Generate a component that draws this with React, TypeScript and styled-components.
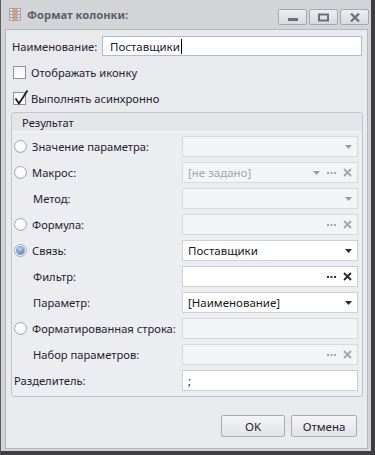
import React from "react";
import styled, { createGlobalStyle } from "styled-components";

const Global = createGlobalStyle`
  html, body { margin: 0; padding: 0; background: #d3d4d8; }
  body { font-family: "Noto Sans", "Open Sans", sans-serif; font-size: 11.2px; color: #1f2030; }
  * { box-sizing: border-box; }
`;

const Window = styled.div`
  width: 375px;
  height: 455px;
  display: flex;
  flex-direction: column;
  background: #d3d4d8;
  border-left: 1px solid #5c5c5e;
  border-right: 4px solid #3e3e40;
  border-bottom: 4px solid #3e3e40;
`;

const TitleBar = styled.div`
  height: 29px;
  flex: none;
  display: flex;
  align-items: center;
  padding: 0 2px 0 8px;
`;

const Title = styled.div`
  margin-left: 6px;
  font-weight: bold;
  font-size: 11.2px;
  color: #5b5e67;
  flex: 1;
`;

const CaptionButtons = styled.div`
  display: flex;
  gap: 2px;
  align-self: flex-start;
  margin-top: 9px;
`;

const CaptionButton = styled.div`
  width: 29px;
  height: 16px;
  border: 1px solid #a7a9af;
  border-radius: 2px;
  background: linear-gradient(#eceef1, #d8d9dd);
  display: flex;
  align-items: center;
  justify-content: center;
`;

const Client = styled.div`
  flex: 1;
  margin: 0 3px 2px 4px;
  border: 1px solid #b4b6bc;
  background: #e9eaee;
  padding: 6px 4px 0 5px;
  display: flex;
  flex-direction: column;
`;

const NameRow = styled.div`
  display: flex;
  align-items: center;
  height: 20px;
  padding-left: 1px;
`;

const TextInput = styled.div`
  margin-left: auto;
  margin-right: 1px;
  width: 260px;
  height: 20px;
  border: 1px solid #a8bdd8;
  background: #fff;
  display: flex;
  align-items: center;
  padding-left: 7px;
  font-size: 11.5px;
`;

const Caret = styled.span`
  display: inline-block;
  width: 1px;
  height: 15px;
  background: #000;
  margin-left: 1px;
`;

const CheckRow = styled.div<{ $mt: number }>`
  display: flex;
  align-items: center;
  height: 16px;
  margin-top: ${(p) => p.$mt}px;
  padding-left: 2px;
  gap: 5px;
`;

const CheckBox = styled.div`
  position: relative;
  width: 13px;
  height: 13px;
  border: 1px solid #8f9197;
  background: linear-gradient(#f4f4f6, #ffffff);
`;

const CheckMark = styled.svg`
  position: absolute;
  left: 0px;
  top: -4px;
`;

const Group = styled.div`
  margin-top: 6px;
  border: 1px solid #c2c4ca;
  border-radius: 3px;
  display: flex;
  flex-direction: column;
`;

const GroupHeader = styled.div`
  height: 19px;
  background: #e4e5e9;
  border-bottom: 1px solid #f6f6f8;
  padding-left: 10px;
  display: flex;
  align-items: center;
  border-radius: 3px 3px 0 0;
`;

const GroupBody = styled.div`
  background: #ecedf0;
  display: grid;
  grid-template-columns: minmax(0, 1fr) 176px;
  row-gap: 5px;
  padding: 4px 4px 5px 0;
  border-radius: 0 0 3px 3px;
`;

const LabelCell = styled.div<{ $indent: number }>`
  display: flex;
  align-items: center;
  gap: 5px;
  padding-left: ${(p) => p.$indent}px;
  white-space: nowrap;
`;

const Radio = styled.div<{ $checked?: boolean }>`
  flex: none;
  width: 13px;
  height: 13px;
  border-radius: 50%;
  border: 1px solid #a3a6ad;
  background: radial-gradient(circle at 50% 35%, #ffffff 40%, #e6e7ea 100%);
  display: flex;
  align-items: center;
  justify-content: center;
  &::after {
    content: "";
    display: ${(p) => (p.$checked ? "block" : "none")};
    width: 7px;
    height: 7px;
    border-radius: 50%;
    background: radial-gradient(circle at 40% 30%, #c3d6f6 0%, #6f95de 55%, #3f67c2 100%);
    box-shadow: 0 0 0 1px #7d97c9;
  }
`;

const Field = styled.div<{ $enabled?: boolean }>`
  height: 21px;
  border: 1px solid ${(p) => (p.$enabled ? "#cdd0d5" : "#d7d9dd")};
  background: ${(p) => (p.$enabled ? "#ffffff" : "#f3f4f6")};
  display: flex;
  align-items: center;
  padding: 0 5px 0 5px;
  font-size: 11.5px;
  color: #1f2030;
`;

const FieldText = styled.span<{ $placeholder?: boolean }>`
  flex: 1;
  color: ${(p) => (p.$placeholder ? "#a4a6ad" : "#1a1a1a")};
  white-space: nowrap;
  overflow: hidden;
`;

const FieldIcons = styled.div`
  display: flex;
  align-items: center;
  gap: 7px;
`;

const ButtonRow = styled.div`
  margin-top: 18px;
  display: flex;
  justify-content: flex-end;
  gap: 6px;
  padding-right: 6px;
`;

const Button = styled.div<{ $w: number }>`
  width: ${(p) => p.$w}px;
  height: 22px;
  border: 1px solid #a9abb1;
  border-radius: 2px;
  background: linear-gradient(#f4f5f7, #e2e3e7);
  display: flex;
  align-items: center;
  justify-content: center;
  color: #1f2030;
  font-size: 11.5px;
`;

const Arrow = ({ dark }: { dark?: boolean }) => (
  <svg width="7" height="4" viewBox="0 0 7 4">
    <path d="M0 0H7L3.5 4Z" fill={dark ? "#2a2a2a" : "#9a9ca3"} />
  </svg>
);

const Dots = ({ dark }: { dark?: boolean }) => (
  <svg width="9" height="2" viewBox="0 0 9 2">
    <g fill={dark ? "#333" : "#a3a5ab"}>
      <rect x="0" y="0" width="2" height="2" />
      <rect x="3.5" y="0" width="2" height="2" />
      <rect x="7" y="0" width="2" height="2" />
    </g>
  </svg>
);

const Cross = ({ dark }: { dark?: boolean }) => (
  <svg width="9" height="9" viewBox="0 0 9 9">
    <path d="M1 1L8 8M8 1L1 8" stroke={dark ? "#2a2a2a" : "#a3a5ab"} strokeWidth="1.8" />
  </svg>
);

type Kind = "combo" | "button" | "combobutton" | "text";

const Input = ({
  kind,
  enabled,
  text,
  placeholder,
}: {
  kind: Kind;
  enabled?: boolean;
  text?: string;
  placeholder?: string;
}) => (
  <Field $enabled={enabled}>
    <FieldText $placeholder={!!placeholder}>{text ?? placeholder ?? ""}</FieldText>
    <FieldIcons>
      {(kind === "combo" || kind === "combobutton") && <Arrow dark={enabled} />}
      {(kind === "button" || kind === "combobutton") && (
        <>
          <Dots dark={enabled} />
          <Cross dark={enabled} />
        </>
      )}
    </FieldIcons>
  </Field>
);

const rows: {
  label: string;
  radio?: boolean;
  checked?: boolean;
  indent: number;
  kind: Kind;
  enabled?: boolean;
  text?: string;
  placeholder?: string;
}[] = [
  { label: "Значение параметра:", radio: true, indent: 2, kind: "combo" },
  { label: "Макрос:", radio: true, indent: 2, kind: "combobutton", placeholder: "[не задано]" },
  { label: "Метод:", indent: 21, kind: "combo" },
  { label: "Формула:", radio: true, indent: 2, kind: "button" },
  { label: "Связь:", radio: true, checked: true, indent: 2, kind: "combo", enabled: true, text: "Поставщики" },
  { label: "Фильтр:", indent: 21, kind: "button", enabled: true },
  { label: "Параметр:", indent: 21, kind: "combo", enabled: true, text: "[Наименование]" },
  { label: "Форматированная строка:", radio: true, indent: 2, kind: "text" },
  { label: "Набор параметров:", indent: 21, kind: "button" },
  { label: "Разделитель:", indent: 2, kind: "text", enabled: true, text: ";" },
];

const TableIcon = () => (
  <svg width="12" height="13" viewBox="0 0 12 13">
    <rect x="0.5" y="0.5" width="11" height="12" fill="#dcdcf2" stroke="#a8a0a8" />
    <rect x="4" y="1" width="4" height="11" fill="#f4a63a" />
    <path d="M0.5 3.5H11.5M0.5 6.5H11.5M0.5 9.5H11.5M4 0.5V12.5M8 0.5V12.5" stroke="#a8a0a8" strokeWidth="1" />
  </svg>
);

export default function App() {
  return (
    <>
      <Global />
      <Window>
        <TitleBar>
          <TableIcon />
          <Title>Формат колонки:</Title>
          <CaptionButtons>
            <CaptionButton>
              <svg width="10" height="10" viewBox="0 0 10 10">
                <rect x="0" y="6" width="10" height="3" fill="#6c6f77" />
              </svg>
            </CaptionButton>
            <CaptionButton>
              <svg width="11" height="9" viewBox="0 0 11 9">
                <rect x="1" y="1.5" width="9" height="6" fill="none" stroke="#6c6f77" strokeWidth="2" />
              </svg>
            </CaptionButton>
            <CaptionButton>
              <svg width="10" height="9" viewBox="0 0 10 9">
                <path d="M1 0.5L9 8.5M9 0.5L1 8.5" stroke="#6c6f77" strokeWidth="2.2" />
              </svg>
            </CaptionButton>
          </CaptionButtons>
        </TitleBar>
        <Client>
          <NameRow>
            Наименование:
            <TextInput>
              Поставщики
              <Caret />
            </TextInput>
          </NameRow>
          <CheckRow $mt={8}>
            <CheckBox />
            Отображать иконку
          </CheckRow>
          <CheckRow $mt={10}>
            <CheckBox>
              <CheckMark width="16" height="17" viewBox="0 0 16 17">
                <path d="M1.5 9.5L5 14.5L13.5 1.5" fill="none" stroke="#1a1a1a" strokeWidth="1.8" />
              </CheckMark>
            </CheckBox>
            Выполнять асинхронно
          </CheckRow>
          <Group>
            <GroupHeader>Результат</GroupHeader>
            <GroupBody>
              {rows.map((r) => (
                <React.Fragment key={r.label}>
                  <LabelCell $indent={r.indent}>
                    {r.radio && <Radio $checked={r.checked} />}
                    {r.label}
                  </LabelCell>
                  <Input kind={r.kind} enabled={r.enabled} text={r.text} placeholder={r.placeholder} />
                </React.Fragment>
              ))}
            </GroupBody>
          </Group>
          <ButtonRow>
            <Button $w={64}>OK</Button>
            <Button $w={66}>Отмена</Button>
          </ButtonRow>
        </Client>
      </Window>
    </>
  );
}
